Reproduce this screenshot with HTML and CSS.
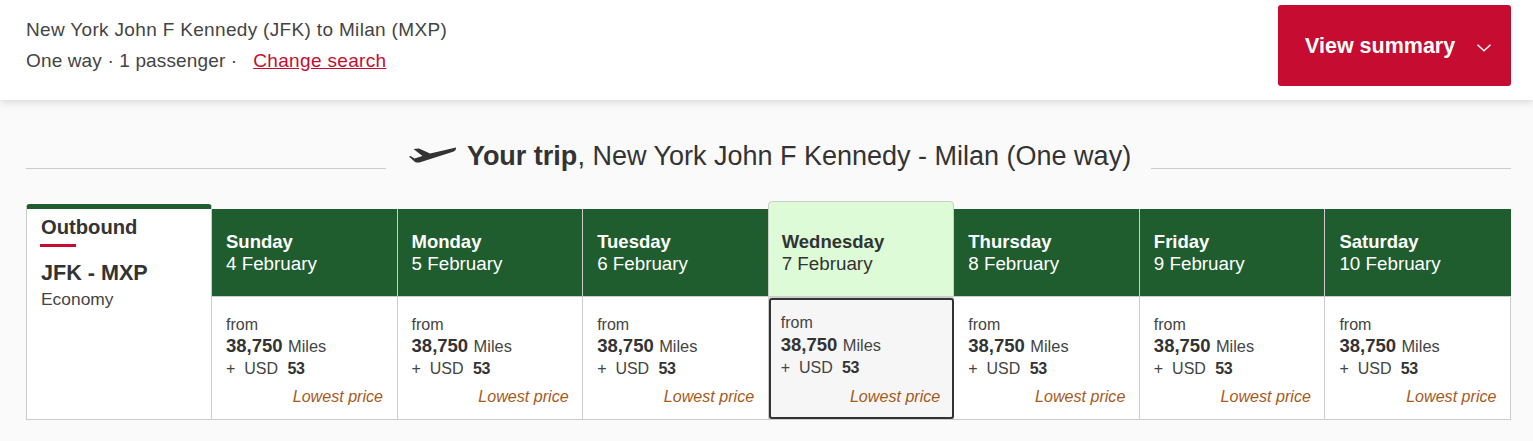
FILE: index.html
```html
<!DOCTYPE html>
<html lang="en">
<head>
<meta charset="utf-8">
<title>Your trip</title>
<link rel="stylesheet" href="styles.css">
</head>
<body>
<header class="topbar">
  <div class="search-info">
    <div class="route">New York John F Kennedy (JFK) to Milan (MXP)</div>
    <div class="meta"><span class="trip-type">One way · 1 passenger ·</span><a href="#" class="change">Change search</a></div>
  </div>
  <button class="summary" type="button"><span>View summary</span>
    <svg class="chev" width="14" height="8" viewBox="0 0 14 8"><path d="M.5 .8l6.500 6 6.500-6" fill="none" stroke="#fff" stroke-width="1.5"/></svg>
  </button>
</header>
<main class="content">
  <div class="title-row">
    <span class="rule"></span>
    <h1 class="title">
      <svg class="plane" width="47" height="16" viewBox="0 0 47 16"><path d="M47 .5L32 4 21 6.500 10 1.500 4.500 2l9 7-8 2.500-4-2.500L0 9.500l6 5.500c2 1 4 .5 6 0L44 4.800c3-1 3.500-3.800 3-4.300z" fill="#333"/></svg>
      <span><b>Your trip</b>, New York John F Kennedy - Milan (One way)</span>
    </h1>
    <span class="rule"></span>
  </div>
  <section class="calendar">
    <div class="bound">
      <div class="bound-title">Outbound</div>
      <div class="bound-route">JFK - MXP</div>
      <div class="bound-class">Economy</div>
    </div>
    <div class="day"><b>Sunday</b><span>4 February</span></div>
    <div class="day"><b>Monday</b><span>5 February</span></div>
    <div class="day"><b>Tuesday</b><span>6 February</span></div>
    <div class="day day-selected"><b>Wednesday</b><span>7 February</span></div>
    <div class="day"><b>Thursday</b><span>8 February</span></div>
    <div class="day"><b>Friday</b><span>9 February</span></div>
    <div class="day"><b>Saturday</b><span>10 February</span></div>

    <div class="fare"><div>from</div><div class="miles"><b>38,750</b> <span>Miles</span></div><div class="usd">+&nbsp; USD &nbsp;<b>53</b></div><div class="lowest">Lowest price</div></div>
    <div class="fare"><div>from</div><div class="miles"><b>38,750</b> <span>Miles</span></div><div class="usd">+&nbsp; USD &nbsp;<b>53</b></div><div class="lowest">Lowest price</div></div>
    <div class="fare"><div>from</div><div class="miles"><b>38,750</b> <span>Miles</span></div><div class="usd">+&nbsp; USD &nbsp;<b>53</b></div><div class="lowest">Lowest price</div></div>
    <div class="fare fare-selected"><div>from</div><div class="miles"><b>38,750</b> <span>Miles</span></div><div class="usd">+&nbsp; USD &nbsp;<b>53</b></div><div class="lowest">Lowest price</div></div>
    <div class="fare"><div>from</div><div class="miles"><b>38,750</b> <span>Miles</span></div><div class="usd">+&nbsp; USD &nbsp;<b>53</b></div><div class="lowest">Lowest price</div></div>
    <div class="fare"><div>from</div><div class="miles"><b>38,750</b> <span>Miles</span></div><div class="usd">+&nbsp; USD &nbsp;<b>53</b></div><div class="lowest">Lowest price</div></div>
    <div class="fare"><div>from</div><div class="miles"><b>38,750</b> <span>Miles</span></div><div class="usd">+&nbsp; USD &nbsp;<b>53</b></div><div class="lowest">Lowest price</div></div>
  </section>
</main>
</body>
</html>
```
FILE: styles.css
```css
* { box-sizing: border-box; }
html, body { margin: 0; height: 441px; overflow: hidden; }
body {
  background: #fafafa;
  color: #333;
  font-family: "Liberation Sans", Arial, sans-serif;
}
.topbar {
  height: 100px;
  background: #fff;
  display: flex;
  justify-content: space-between;
  padding: 5px 22px 0 26px;
  box-shadow: 0 2px 8px rgba(0, 0, 0, .14);
  position: relative;
}
.search-info { font-size: 19px; letter-spacing: .33px; line-height: 31px; color: #444; padding-top: 9px; }
.route { height: 31px; }
.meta { display: flex; gap: 16px; }
.trip-type { letter-spacing: .14px; }
.change { color: #c60c30; }
.summary {
  width: 233px;
  height: 81px;
  background: #c60c30;
  border: 0;
  border-radius: 3px;
  color: #fff;
  font: bold 21.500px "Liberation Sans", Arial, sans-serif;
  display: flex;
  align-items: center;
  padding: 1px 0 0 27px;
  gap: 22px;
}
.chev { margin-top: 3px; }
.content { padding: 0 22px 0 26px; }
.title-row { display: flex; align-items: center; height: 102px; gap: 23px; }
.rule { flex: 1; height: 1px; background: #ccc; margin-top: 35px; }
.title {
  margin: 0 -3px 0 0;
  font-size: 27px;
  font-weight: 400;
  display: flex;
  align-items: center;
  gap: 11px;
  white-space: nowrap;
  padding-top: 10px;
}
.plane { flex: none; margin-top: -3px; }
.calendar {
  display: grid;
  grid-template-columns: 186px repeat(7, 1fr);
  grid-template-rows: 88px 122px;
  margin-top: 7px;
  position: relative;
  border-bottom: 1px solid #ccc;
}
.bound {
  grid-row: 1 / 3;
  background: #fff;
  border: 1px solid #ccc;
  border-bottom: 0;
  border-top: 5px solid #1f5c2e;
  border-radius: 4px 4px 0 0;
  margin-top: -5px;
  padding: 5px 14px 0;
}
.bound-title { font-size: 20.200px; font-weight: bold; line-height: 26px; }
.bound-title::after { content: ""; display: block; width: 36px; height: 3px; background: #c60c30; margin: 4px 0 0 -1px; }
.bound-route { font-size: 21.600px; font-weight: bold; line-height: 26px; margin-top: 13px; }
.bound-class { font-size: 17.400px; line-height: 26px; color: #444; }
.day {
  background: #1f5c2e;
  color: #fff;
  border-right: 1px solid #ccc;
  border-bottom: 1px solid #ccc;
  padding: 22px 14px 0;
  font-size: 18.800px;
  line-height: 22px;
  display: flex;
  flex-direction: column;
}
.day b { font-size: 18.500px; }
.day:nth-child(8) { border-right: 0; }
.day-selected {
  background: #dcfbd6;
  color: #333;
  border: 1px solid #ccc;
  border-radius: 4px 4px 0 0;
  margin: -8px 0 0 -1px;
  padding: 29px 14px 0 13px;
}
.fare {
  background: #fff;
  border-right: 1px solid #ccc;
  padding: 17px 14px 0;
  font-size: 16px;
  line-height: 21px;
  color: #444;
}
.miles { height: 21px; }
.miles b { font-size: 18.500px; color: #333; }
.miles span { margin-left: 1px; font-size: 16.400px; }
.usd { line-height: 25px; }
.usd b { color: #333; letter-spacing: -.4px; margin-left: .5px; }
.lowest { font-size: 16.100px; font-style: italic; color: #a65a1c; text-align: right; margin: 5px -.5px 0 0; }
.fare-selected {
  background: #f6f6f6;
  border: 2px solid #333;
  border-radius: 3px;
  margin: 1px 0 0;
  padding: 12px 12px 0 10px;
  box-shadow: 0 0 0 1px #ccc;
}
.fare-selected .miles { margin-top: 1px; }
.fare-selected .lowest { margin: 6px 0 0; }
```
